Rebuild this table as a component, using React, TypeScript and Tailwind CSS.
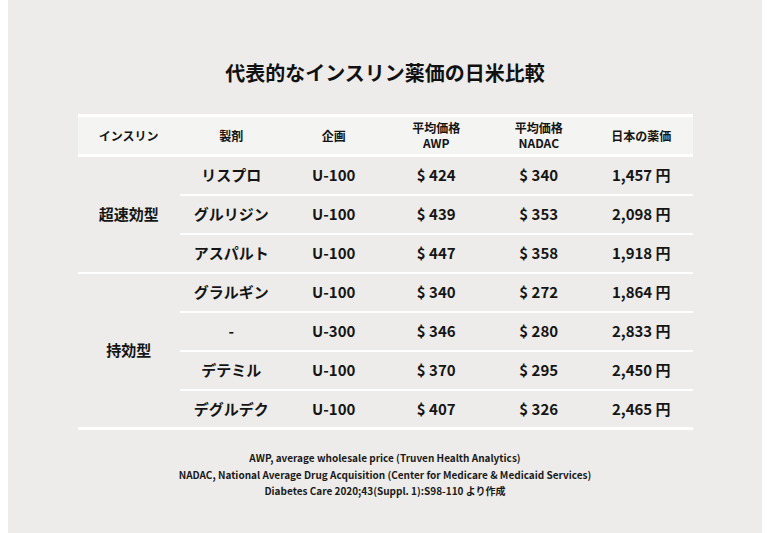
import React from 'react';

type Row = { name: string; conc: string; awp: string; nadac: string; jp: string };

const groups: { label: string; rows: Row[] }[] = [
  {
    label: '超速効型',
    rows: [
      { name: 'リスプロ', conc: 'U-100', awp: '$ 424', nadac: '$ 340', jp: '1,457 円' },
      { name: 'グルリジン', conc: 'U-100', awp: '$ 439', nadac: '$ 353', jp: '2,098 円' },
      { name: 'アスパルト', conc: 'U-100', awp: '$ 447', nadac: '$ 358', jp: '1,918 円' },
    ],
  },
  {
    label: '持効型',
    rows: [
      { name: 'グラルギン', conc: 'U-100', awp: '$ 340', nadac: '$ 272', jp: '1,864 円' },
      { name: '-', conc: 'U-300', awp: '$ 346', nadac: '$ 280', jp: '2,833 円' },
      { name: 'デテミル', conc: 'U-100', awp: '$ 370', nadac: '$ 295', jp: '2,450 円' },
      { name: 'デグルデク', conc: 'U-100', awp: '$ 407', nadac: '$ 326', jp: '2,465 円' },
    ],
  },
];

const font = { fontFamily: '"Noto Sans CJK JP", "Noto Sans", sans-serif' };

export default function App() {
  return (
    <div className="w-[770px] h-[533px] bg-white px-2" style={font}>
      <div className="h-full bg-[#edecea] flex flex-col items-center">
        <h1 className="mt-[61px] text-[20px] leading-[24px] font-bold text-[#111]">
          代表的なインスリン薬価の日米比較
        </h1>

        <table className="mt-[29px] w-[615px] table-fixed border-collapse text-center text-[#151515]">
          <thead>
            <tr className="bg-[#f4f4f3] border-y-[3px] border-white text-[12px] leading-[16px] font-bold">
              <th className="h-[40px] p-0 font-bold">インスリン</th>
              <th className="p-0 font-bold">製剤</th>
              <th className="p-0 font-bold">企画</th>
              <th className="p-0 font-bold">
                <div>平均価格</div>
                <div className="-mt-[1px]">AWP</div>
              </th>
              <th className="p-0 font-bold">
                <div>平均価格</div>
                <div className="-mt-[1px]">NADAC</div>
              </th>
              <th className="p-0 font-bold">日本の薬価</th>
            </tr>
          </thead>
          {groups.map((g, gi) => (
            <tbody
              key={g.label}
              className={
                gi === groups.length - 1
                  ? 'border-b-[3px] border-white'
                  : 'border-b-2 border-white'
              }
            >
              {g.rows.map((r, ri) => (
                <tr key={ri} className="text-[15px] font-bold">
                  {ri === 0 && (
                    <td rowSpan={g.rows.length} className="p-0 align-middle">
                      {g.label}
                    </td>
                  )}
                  {[r.name, r.conc, r.awp, r.nadac, r.jp].map((v, ci) => (
                    <td
                      key={ci}
                      className={
                        ri === 0 ? 'h-[39px] p-0' : 'h-[39px] p-0 border-t-2 border-white'
                      }
                    >
                      {v}
                    </td>
                  ))}
                </tr>
              ))}
            </tbody>
          ))}
        </table>

        <div className="mt-[20px] text-center text-[10px] leading-[16.5px] font-bold text-[#1a1a1a]">
          <p>AWP, average wholesale price (Truven Health Analytics)</p>
          <p>NADAC, National Average Drug Acquisition (Center for Medicare &amp; Medicaid Services)</p>
          <p>Diabetes Care 2020;43(Suppl. 1):S98-110 より作成</p>
        </div>
      </div>
    </div>
  );
}
